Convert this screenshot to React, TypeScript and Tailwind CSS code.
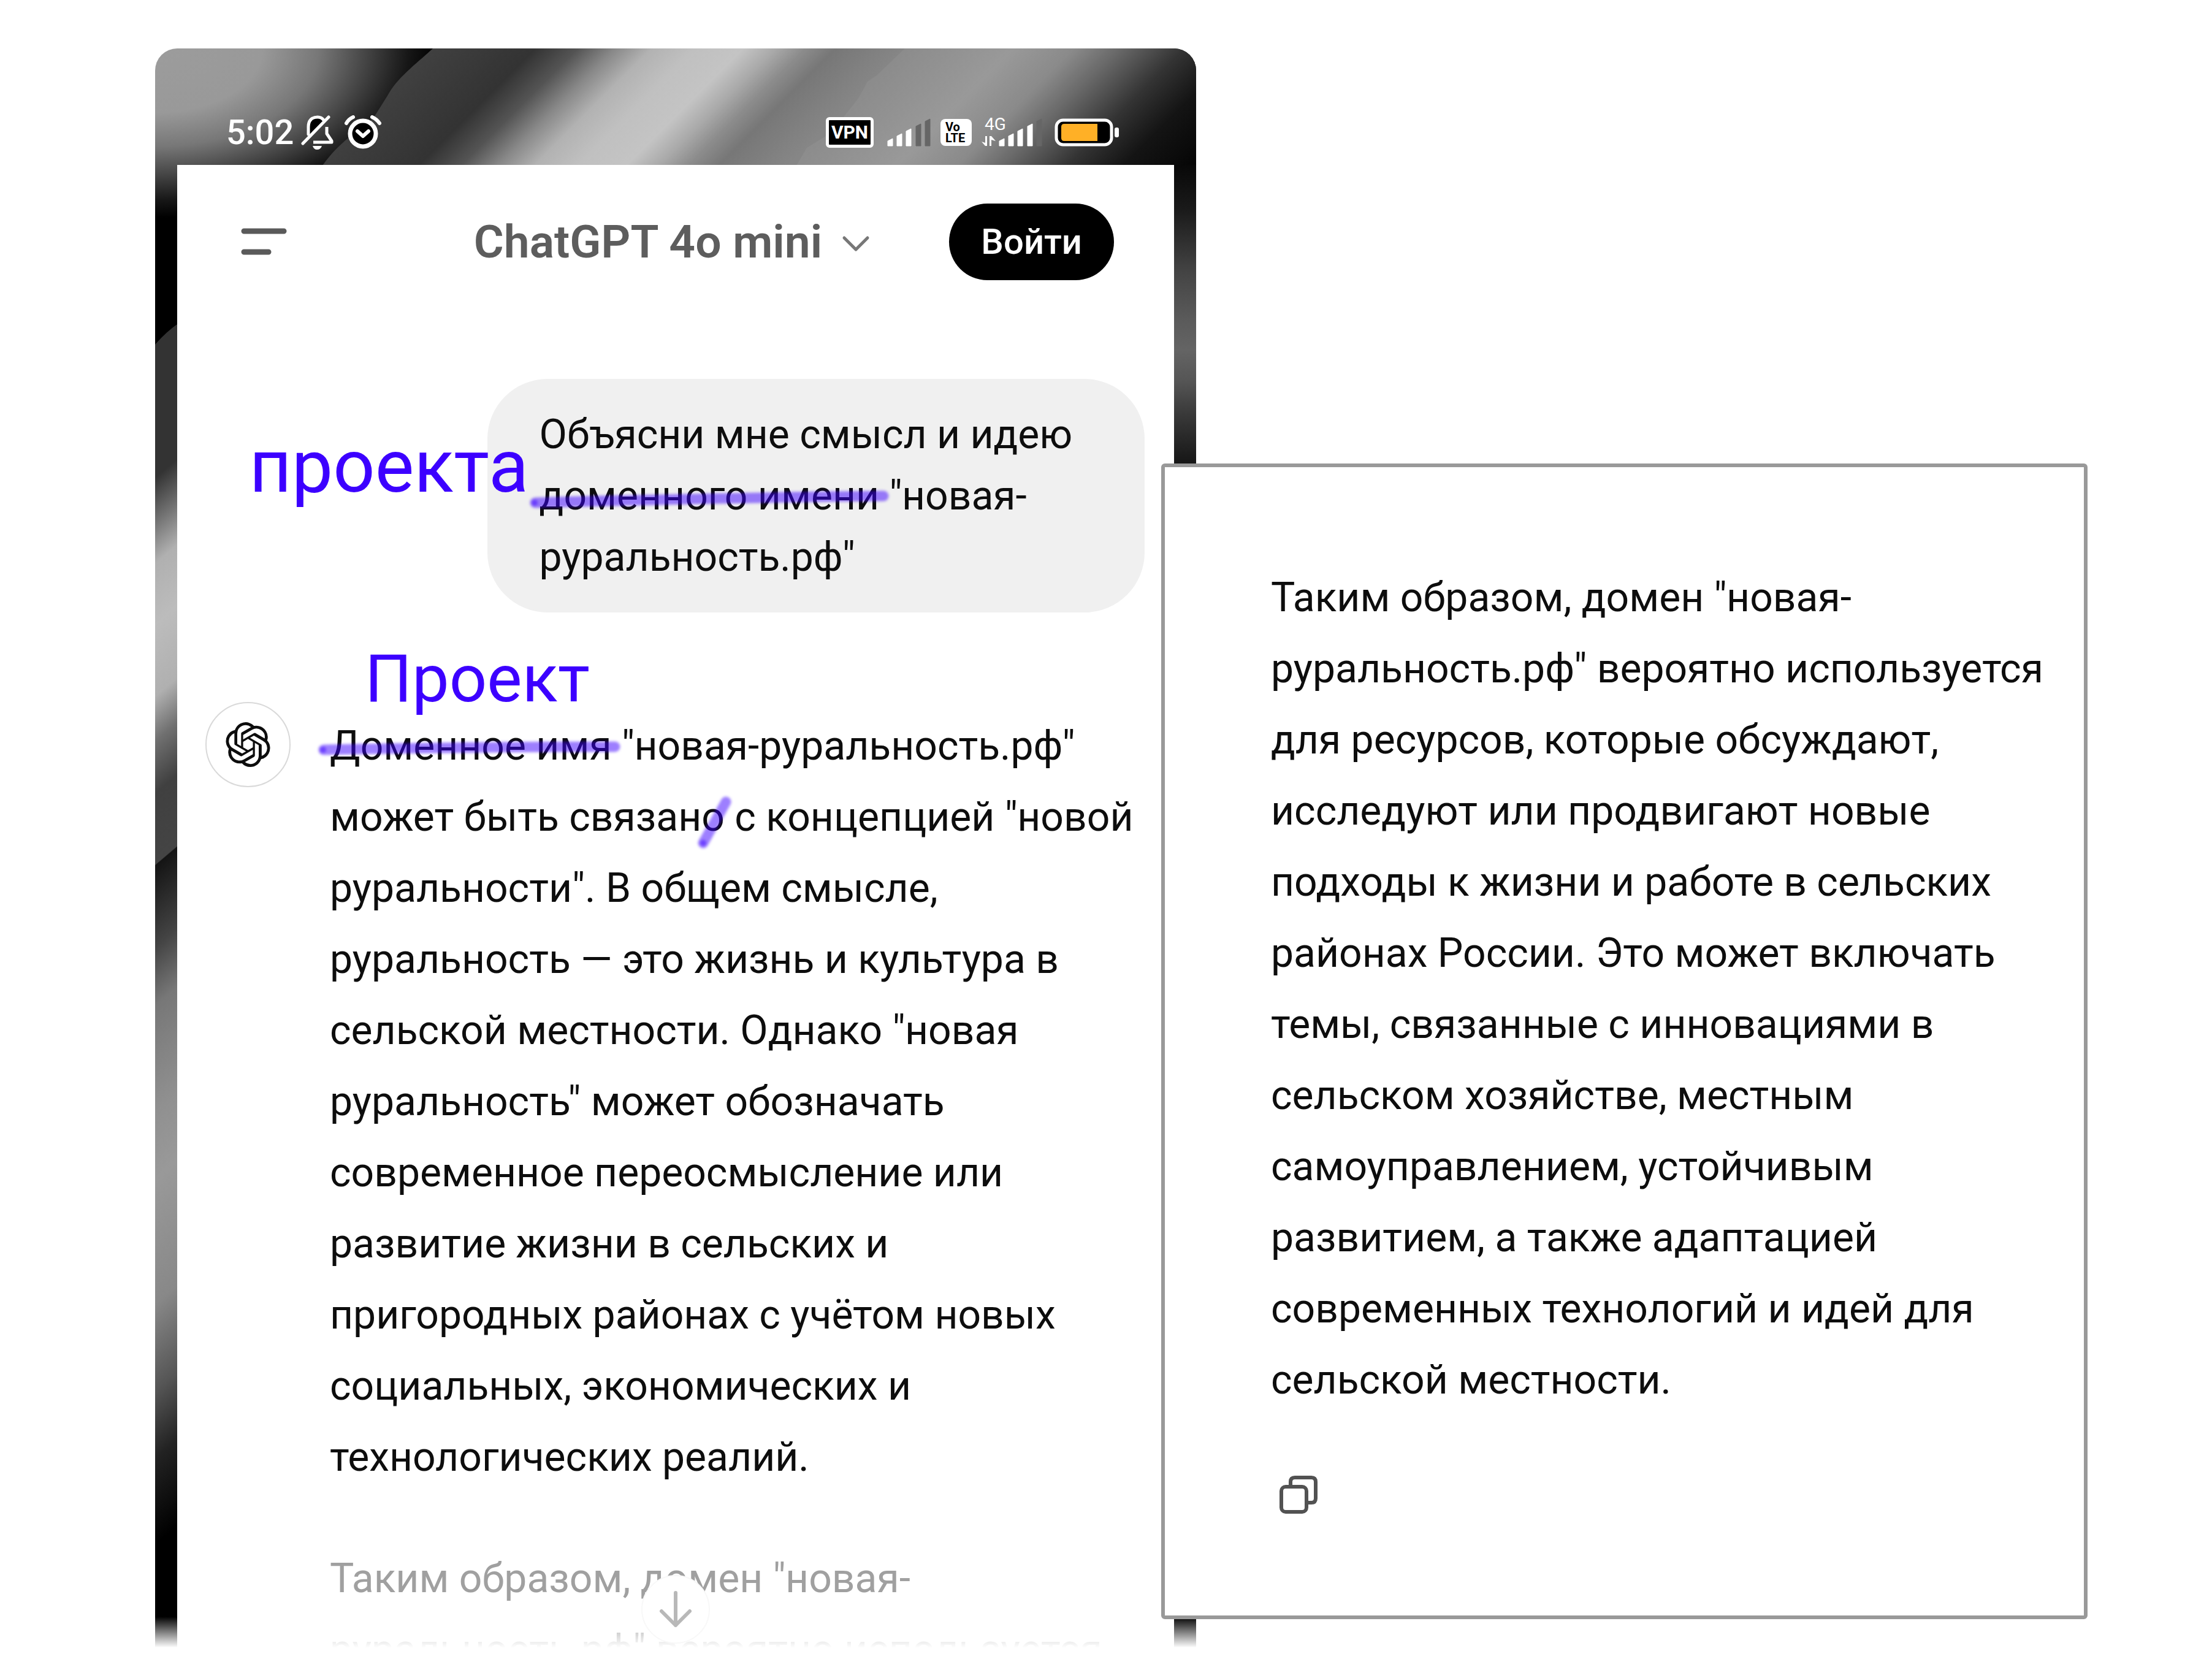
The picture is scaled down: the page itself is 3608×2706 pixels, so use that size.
import type { ReactNode } from "react";

const INK = "#3c00ff";

const OPENAI_PATH =
  "M22.2819 9.8211a5.9847 5.9847 0 0 0-.5157-4.9108 6.0462 6.0462 0 0 0-6.5098-2.9A6.0651 6.0651 0 0 0 4.9807 4.1818a5.9847 5.9847 0 0 0-3.9977 2.9 6.0462 6.0462 0 0 0 .7427 7.0966 5.98 5.98 0 0 0 .511 4.9107 6.051 6.051 0 0 0 6.5146 2.9001A5.9847 5.9847 0 0 0 13.2599 24a6.0557 6.0557 0 0 0 5.7718-4.2058 5.9894 5.9894 0 0 0 3.9977-2.9001 6.0557 6.0557 0 0 0-.7475-7.0729zm-9.022 12.6081a4.4755 4.4755 0 0 1-2.8764-1.0408l.1419-.0804 4.7783-2.7582a.7948.7948 0 0 0 .3927-.6813v-6.7369l2.02 1.1686a.071.071 0 0 1 .038.052v5.5826a4.504 4.504 0 0 1-4.4945 4.4944zm-9.6607-4.1254a4.4708 4.4708 0 0 1-.5346-3.0137l.142.0852 4.783 2.7582a.7712.7712 0 0 0 .7806 0l5.8428-3.3685v2.3324a.0804.0804 0 0 1-.0332.0615L9.74 19.9502a4.4992 4.4992 0 0 1-6.1408-1.6464zM2.3408 7.8956a4.485 4.485 0 0 1 2.3655-1.9728V11.6a.7664.7664 0 0 0 .3879.6765l5.8144 3.3543-2.0201 1.1685a.0757.0757 0 0 1-.071 0l-4.8303-2.7865A4.504 4.504 0 0 1 2.3408 7.872zm16.5963 3.8558L13.1038 8.364 15.1192 7.2a.0757.0757 0 0 1 .071 0l4.8303 2.7913a4.4944 4.4944 0 0 1-.6765 8.1042v-5.6772a.79.79 0 0 0-.407-.667zm2.0107-3.0231l-.142-.0852-4.7735-2.7818a.7759.7759 0 0 0-.7854 0L9.409 9.2297V6.8974a.0662.0662 0 0 1 .0284-.0615l4.8303-2.7866a4.4992 4.4992 0 0 1 6.6802 4.66zM8.3065 12.863l-2.02-1.1638a.0804.0804 0 0 1-.038-.0567V6.0742a4.4992 4.4992 0 0 1 7.3757-3.4537l-.142.0805L8.704 5.459a.7948.7948 0 0 0-.3927.6813zm1.0976-2.3654l2.602-1.4998 2.6069 1.4998v2.9994l-2.5974 1.4997-2.6067-1.4997Z";

type Stop = [offset: number, color: string];

// stops are given in user units and turned into fractions of `length`
function Stops({ stops, length }: { stops: Stop[]; length: number }) {
  return (
    <>
      {stops.map(([at, color]) => (
        <stop key={at} offset={at / length} stopColor={color} />
      ))}
    </>
  );
}

const BAND_STOPS: Stop[] = [
  [453, "#404040"],
  [620, "#333333"],
  [690, "#545454"],
  [750, "#888888"],
  [810, "#b2b2b2"],
  [880, "#c0c0c0"],
  [960, "#c4c4c4"],
  [1010, "#ababab"],
  [1060, "#8c8c8c"],
  [1110, "#777777"],
  [1223, "#868686"],
];

const RIGHT_STOPS: Stop[] = [
  [1200, "#8a8a8a"],
  [1400, "#999999"],
  [1500, "#8a8a8a"],
  [1580, "#666666"],
  [1680, "#333333"],
  [1770, "#141414"],
  [1888, "#050505"],
];

const LEFT_EDGE_STOPS: Stop[] = [
  [483, "#333333"],
  [700, "#333333"],
  [770, "#707070"],
  [840, "#b0b0b0"],
  [940, "#bcbcbc"],
  [1057, "#b0b0b0"],
  [1130, "#707070"],
  [1215, "#404040"],
  [1331, "#444444"],
  [1333, "#141414"],
  [1466, "#444444"],
  [1561, "#777777"],
  [1734, "#909090"],
  [1844, "#999999"],
  [2048, "#888888"],
  [2190, "#555555"],
  [2300, "#222222"],
  [2441, "#000000"],
];

const RIGHT_EDGE_STOPS: Stop[] = [
  [190, "#080808"],
  [263, "#1a1a1a"],
  [365, "#444444"],
  [441, "#5a5a5a"],
  [492, "#646464"],
  [543, "#555555"],
  [594, "#3a3a3a"],
  [670, "#191919"],
  [760, "#000000"],
];

function Wallpaper() {
  return (
    <svg
      className="absolute inset-0 size-full"
      viewBox="0 0 1698 2614"
      preserveAspectRatio="none"
      aria-hidden="true"
    >
      <defs>
        <radialGradient
          id="corner"
          gradientUnits="userSpaceOnUse"
          cx="0"
          cy="0"
          r="460"
          gradientTransform="scale(1 0.6)"
        >
          <stop offset="0" stopColor="#9c9c9c" />
          <stop offset="0.38" stopColor="#999999" />
          <stop offset="0.58" stopColor="#777777" />
          <stop offset="0.75" stopColor="#444444" />
          <stop offset="0.9" stopColor="#161616" />
          <stop offset="1" stopColor="#000000" />
        </radialGradient>
        <linearGradient id="band" gradientUnits="userSpaceOnUse" x1="0" y1="0" x2="944" y2="944">
          <Stops stops={BAND_STOPS} length={1888} />
        </linearGradient>
        <linearGradient id="right" gradientUnits="userSpaceOnUse" x1="0" y1="0" x2="944" y2="944">
          <Stops stops={RIGHT_STOPS} length={1888} />
        </linearGradient>
        <linearGradient id="leftEdge" gradientUnits="userSpaceOnUse" x1="0" y1="0" x2="1290" y2="1518">
          <Stops stops={LEFT_EDGE_STOPS} length={2614} />
        </linearGradient>
        <linearGradient id="rightEdge" gradientUnits="userSpaceOnUse" x1="0" y1="0" x2="0" y2="2614">
          <Stops stops={RIGHT_EDGE_STOPS} length={2614} />
        </linearGradient>
      </defs>
      <rect width="1698" height="2614" fill="url(#corner)" />
      <path
        d="M453 0C432 20 398 45 382 72C370 92 362 104 357 112C338 130 300 152 273 191H1230V0Z"
        fill="url(#band)"
      />
      <path
        d="M1223 0L1177 44L1162 54C1156 66 1150 76 1145 84L1122 113C1115 126 1106 136 1094 143L1063 162L1046 191H1698V0Z"
        fill="url(#right)"
      />
      <path d="M0 483Q18 462 40 447V2614H0Z" fill="url(#leftEdge)" />
      <rect x="1658" y="190" width="40" height="2424" fill="url(#rightEdge)" />
    </svg>
  );
}

function Signal({ active }: { active: number }) {
  return (
    <svg className="h-[46px] w-[71px]" viewBox="0 0 71 46" aria-hidden="true">
      {[33, 25, 17, 9, 1].map((top, i) => {
        const x = i * 15 + (i > 2 ? 1 : 0);
        return (
          <path
            key={top}
            d={`M${x + 1} ${top + 4}L${x + 9} ${top}V45H${x + 1}Z`}
            fill={i < active ? "#fff" : "#666"}
            stroke={i < active ? "#fff" : "#666"}
            strokeLinejoin="round"
          />
        );
      })}
    </svg>
  );
}

function StatusBar() {
  return (
    <div className="relative flex h-[190px] items-center justify-between pt-[84px] pr-[125px] pl-[116px] text-white">
      <div className="flex items-center gap-3">
        <time className="text-[56px] leading-[60px] font-medium">5:02</time>
        <svg className="h-[58px] w-[54px]" viewBox="0 0 54 58" fill="none" aria-label="Без звука">
          <path d="M13 33V19Q14 5 27 5Q34 5 38 11Z" fill="#000" />
          <g stroke="#fff" strokeWidth="5" strokeLinecap="round" strokeLinejoin="round">
            <path d="M12 32V20C12 9 18 4 27 4C32 4 35 6 37 9" />
            <path d="M3 47L45 4" />
            <path d="M42 20V31L50 43V45H20" strokeLinecap="butt" />
          </g>
          <path d="M19 51H34Q32 57 26 57Q21 57 19 51Z" fill="#fff" />
        </svg>
        <svg className="ml-1 h-[56px] w-[61px]" viewBox="0 0 61 56" fill="none" stroke="#fff" strokeLinecap="round" aria-label="Будильник">
          <circle cx="31" cy="30" r="21" fill="#000" strokeWidth="7" />
          <path d="M22 26L31 34L40 26" strokeWidth="6" strokeLinejoin="round" />
          <path d="M4 13Q8 6 15 3M46 3Q53 6 58 13" strokeWidth="6" />
        </svg>
      </div>
      <div className="flex items-center">
        <span className="flex h-[50px] w-[78px] items-center justify-center rounded-md border-[5px] border-white bg-black text-[30px] leading-none font-bold">
          VPN
        </span>
        <span className="ml-[22px] flex">
          <Signal active={3} />
        </span>
        <span className="ml-4 flex h-[44px] w-[51px] flex-col justify-center rounded-lg bg-white pl-2 text-[20px] leading-[18px] font-bold text-black">
          <span>Vo</span>
          <span>LTE</span>
        </span>
        <span className="relative ml-4 flex w-[99px] justify-end">
          <span className="absolute -top-1 left-[5px] text-[28px] leading-[28px]">4G</span>
          <svg className="absolute bottom-0 left-0 h-[18px] w-6" viewBox="0 0 24 18" fill="#fff" aria-hidden="true">
            <path d="M6 1H9V17L6 17L0 10L6 12Z" />
            <path d="M13 17V1L16 1L23 9L16 7V17Z" />
          </svg>
          <Signal active={4} />
        </span>
        <svg className="ml-5 h-[46px] w-[106px]" viewBox="0 0 106 46" aria-label="Заряд батареи">
          <rect x="3" y="3" width="90" height="40" rx="11" fill="#000" stroke="#fff" strokeWidth="5" />
          <path d="M16 9H70V37H16Q11 37 11 32V14Q11 9 16 9Z" fill="#ffb026" />
          <rect x="98" y="15" width="7" height="16" rx="3" fill="#fff" />
        </svg>
      </div>
    </div>
  );
}

function ChatHeader() {
  return (
    <header className="grid h-[250px] grid-cols-[1fr_auto_1fr] items-center pr-[98px] pl-[86px]">
      <button type="button" aria-label="Открыть меню" className="justify-self-start p-[18px]">
        <svg className="h-[44px] w-[76px]" viewBox="0 0 76 44" stroke="#5a5a5a" strokeWidth="9" strokeLinecap="round">
          <path d="M5 5H70M5 39H45" />
        </svg>
      </button>
      <button type="button" className="flex items-center gap-8 text-[75px] leading-[80px] font-semibold text-[#5d5d5d]">
        ChatGPT 4o mini
        <svg className="mt-2 h-[28px] w-[46px]" viewBox="0 0 46 28" fill="none" stroke="#777" strokeWidth="5" strokeLinecap="round" strokeLinejoin="round">
          <path d="M4 4L23 23L42 4" />
        </svg>
      </button>
      <button type="button" className="h-[125px] justify-self-end rounded-full bg-black px-[52px] text-[58px] leading-[60px] font-medium text-white">
        Войти
      </button>
    </header>
  );
}

// marker drawn across a piece of text; the text keeps its place in the line
function Marked({ children, d, dot }: { children: ReactNode; d: string; dot: [number, number] }) {
  return (
    <span className="relative">
      {children}
      <svg
        className="absolute top-0 left-0 h-[78px] w-full overflow-visible"
        fill="none"
        stroke={INK}
        strokeLinecap="round"
        aria-hidden="true"
      >
        <g className="blur-[2px]">
          <path d={d} strokeWidth="17" strokeOpacity="0.5" />
          <circle cx={dot[0]} cy={dot[1]} r="5" fill={INK} fillOpacity="0.5" stroke="none" />
        </g>
      </svg>
    </span>
  );
}

function Question() {
  return (
    <div className="relative ml-auto max-w-[70%] rounded-[98px] bg-[#f0f0f0] pt-[41px] pr-[83px] pb-[40px] pl-[85px] text-[66px] leading-[100px]">
      Объясни мне смысл и идею{" "}
      <Marked d="M-7 50Q280 42 561 39" dot={[-8, 50]}>
        доменного имени
      </Marked>{" "}
      "новая-руральность.рф"
      <span className="absolute top-[83px] -left-[388px] text-[120px] leading-none text-[#3c00ff]">проекта</span>
    </div>
  );
}

function Answer() {
  return (
    <div className="mt-[146px] flex gap-16">
      <div className="flex size-[139px] shrink-0 items-center justify-center rounded-full border-2 border-[#d9d9d9]">
        <svg className="size-[73px]" viewBox="0 0 24 24" fill="#0d0d0d" aria-label="ChatGPT">
          <path d={OPENAI_PATH} />
        </svg>
      </div>
      <div className="relative pt-[14px] text-[66px] leading-[116px]">
        <span className="absolute -top-[92px] left-[57px] text-[108px] leading-none text-[#3c00ff]">Проект</span>
        <p>
          <Marked d="M-10 45Q240 40 465 40" dot={[-11, 45]}>
            Доменное имя
          </Marked>{" "}
          "новая-руральность.рф" может быть связан
          <Marked d="M3 81L40 14" dot={[3, 81]}>
            о
          </Marked>{" "}
          с концепцией "новой руральности". В общем смысле, руральность — это жизнь и культура в сельской местности.
          Однако "новая руральность" может обозначать современное переосмысление или развитие жизни в сельских и
          пригородных районах с учётом новых социальных, экономических и технологических реалий.
        </p>
        <p className="mt-[82px] h-[176px] overflow-hidden text-[#a0a0a0]">
          Таким образом, домен "новая-руральность.рф" вероятно используется
        </p>
      </div>
    </div>
  );
}

function Phone() {
  return (
    <section className="relative col-start-2 self-start overflow-hidden rounded-t-[36px]">
      <Wallpaper />
      <StatusBar />
      <div className="relative mx-9 bg-white">
        <ChatHeader />
        <div className="flex flex-col pt-[99px] pr-12 pl-[46px]">
          <Question />
          <Answer />
        </div>
      </div>
      {/* the screen dissolves into the page */}
      <div className="absolute inset-x-0 bottom-0 h-[56px] bg-linear-to-b from-white/0 to-white to-90%" />
      <button
        type="button"
        aria-label="Прокрутить вниз"
        className="absolute bottom-3 left-1/2 flex size-28 -translate-x-1/2 items-center justify-center rounded-full border-2 border-[#f8f8f8] bg-white"
      >
        <svg className="h-[60px] w-[52px]" viewBox="0 0 52 60" fill="none" stroke="#b8b8b8" strokeWidth="6" strokeLinecap="round" strokeLinejoin="round">
          <path d="M26 3V56M3 33L26 56L49 33" />
        </svg>
      </button>
    </section>
  );
}

function Continuation() {
  return (
    <section className="relative mt-[677px] mr-[203px] -ml-[57px] self-start rounded-md border-[6px] border-[#999] bg-white pt-[155px] pr-12 pb-[165px] pl-[173px] text-[66px] leading-[116px]">
      <p>
        Таким образом, домен "новая-руральность.рф" вероятно используется для ресурсов, которые обсуждают, исследуют
        или продвигают новые подходы к жизни и работе в сельских районах России. Это может включать темы, связанные с
        инновациями в сельском хозяйстве, местным самоуправлением, устойчивым развитием, а также адаптацией современных
        технологий и идей для сельской местности.
      </p>
      <button type="button" aria-label="Копировать" className="mt-[97px] ml-[13px] block">
        <svg className="size-[64px]" viewBox="0 0 64 64" fill="none" stroke="#525252" strokeWidth="6" strokeLinejoin="round">
          <rect x="4" y="19" width="41" height="41" rx="7" />
          <path d="M19 19V11Q19 4 26 4H53Q60 4 60 11V38Q60 45 53 45H45" />
        </svg>
      </button>
    </section>
  );
}

export default function App() {
  return (
    <main className="grid min-h-screen w-full grid-cols-[253fr_1698fr_1657fr] overflow-hidden bg-white pt-[79px] font-['Roboto','Noto_Sans',sans-serif] text-[#0d0d0d]">
      <Phone />
      <Continuation />
    </main>
  );
}
